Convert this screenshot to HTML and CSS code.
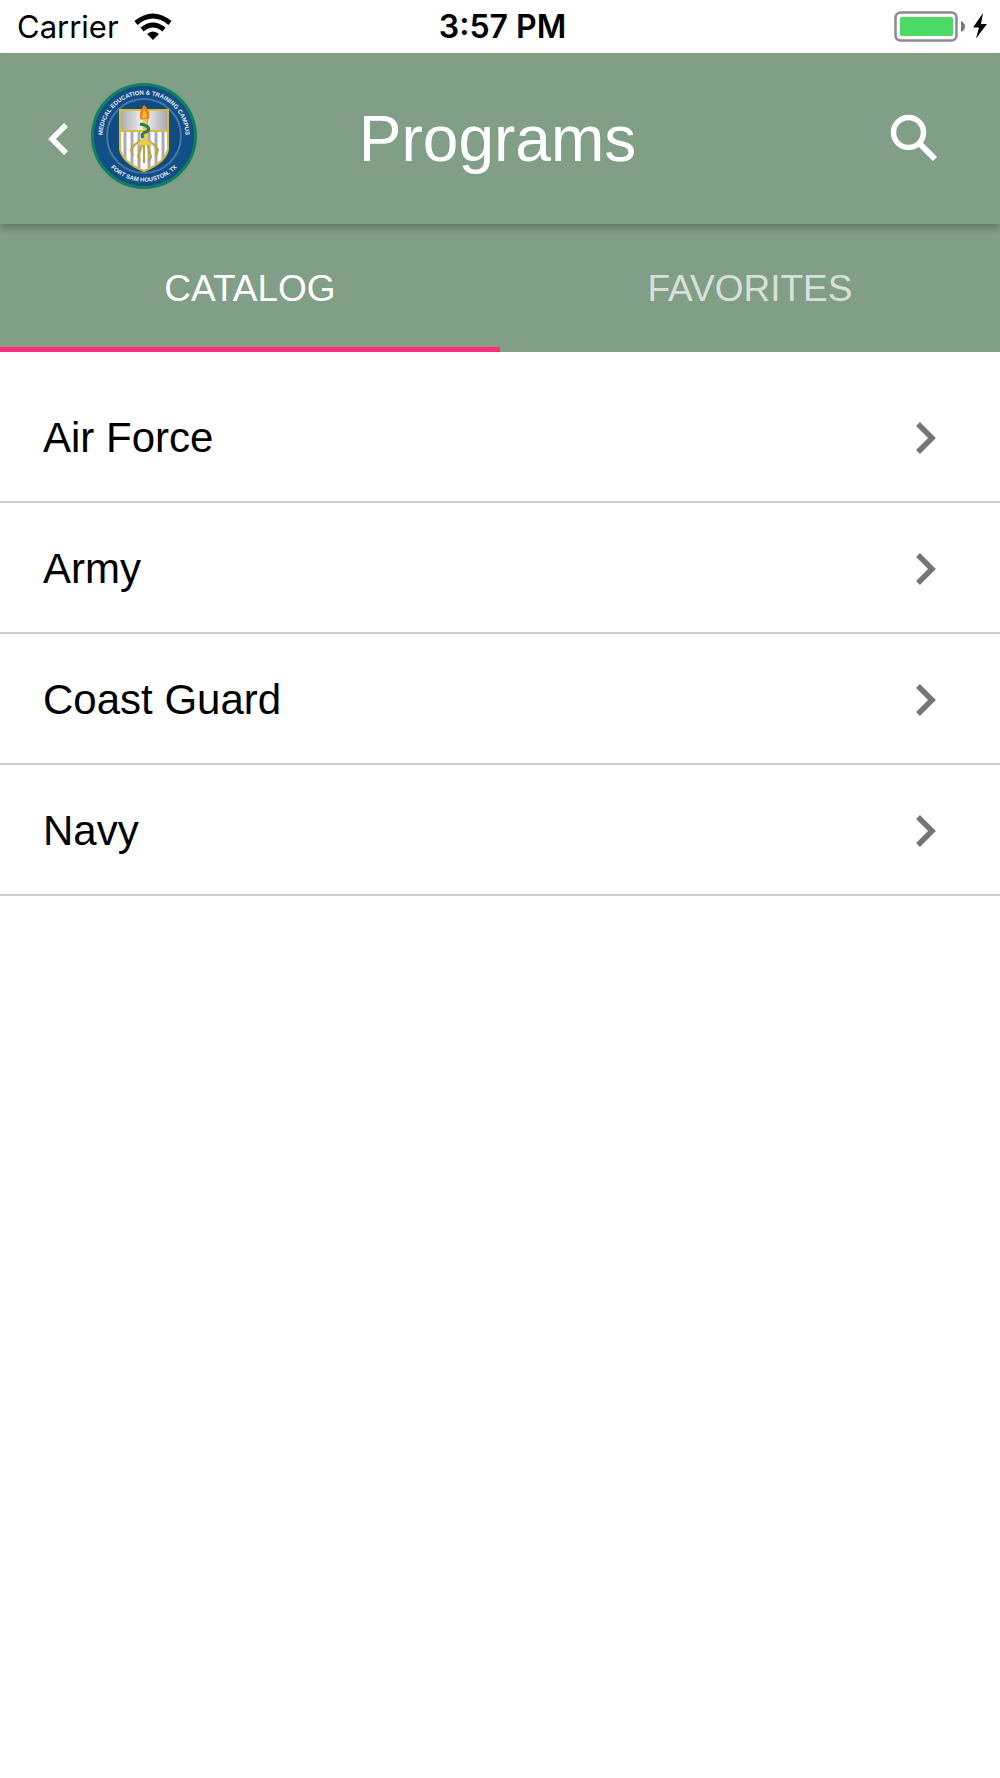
FILE: index.html
```html
<!DOCTYPE html>
<html lang="en">
<head>
<meta charset="utf-8">
<meta name="viewport" content="width=device-width, initial-scale=1">
<title>Programs</title>
<link rel="stylesheet" href="styles.css">
</head>
<body>
<div class="status-bar">
  <div class="status-left">
    <span>Carrier</span>
    <svg class="wifi" viewBox="0 0 38 28" width="38" height="28" aria-hidden="true">
      <path d="M2 10 Q19 -4 36 10" fill="none" stroke="#000" stroke-width="5"/>
      <path d="M8 16.500 Q19 7.500 30 16.500" fill="none" stroke="#000" stroke-width="5"/>
      <path d="M13 21 Q19 16 25 21 L19 27Z"/>
    </svg>
  </div>
  <div class="status-time">3:57 PM</div>
  <div class="status-right">
    <svg viewBox="0 0 94 32" width="94" height="32" aria-hidden="true">
      <rect x="1.500" y="1.500" width="61" height="28" rx="5" fill="#fff" stroke="#8c8c8c" stroke-width="2.500"/>
      <rect x="6" y="6" width="53" height="19" rx="2" fill="#4cd964"/>
      <path d="M67 10 Q71 12 71 15.500 Q71 19 67 21Z" fill="#777"/>
      <path d="M89 2 L79 16.500 L85 16.500 L82 27.500 L93 13 L87 13Z"/>
    </svg>
  </div>
</div>

<header class="app-bar">
  <div class="app-bar-start">
    <button class="icon-button" type="button" aria-label="Back">
      <svg viewBox="0 0 24 36" width="24" height="36"><path d="M20 4 L6 18 L20 32" fill="none" stroke="#fff" stroke-width="5.500"/></svg>
    </button>
    <svg class="seal" viewBox="0 0 106 106" width="106" height="106" role="img" aria-label="Medical Education and Training Campus seal">
      <defs>
        <linearGradient id="silver" x1="0" x2="1" y1="0" y2="0">
          <stop offset="0" stop-color="#a9a9b0"/><stop offset=".5" stop-color="#f6f6f8"/><stop offset="1" stop-color="#a4a4ac"/>
        </linearGradient>
        <clipPath id="shield"><path d="M29 27 H77 V66 Q75 79 53 88 Q31 79 29 66Z"/></clipPath>
        <path id="arc-top" d="M11.500 53 A41.500 41.500 0 0 1 94.500 53"/>
        <path id="arc-bottom" d="M14 77 A46 46 0 0 0 92 77"/>
      </defs>
      <circle cx="53" cy="53" r="51.500" fill="#134f87" stroke="#11805f" stroke-width="3"/>
      <circle cx="53" cy="53" r="37" fill="#134a80" stroke="#4379ad" stroke-width="2"/>
      <text class="seal-text"><textPath href="#arc-top" startOffset="50%">MEDICAL EDUCATION &amp; TRAINING CAMPUS</textPath></text>
      <text class="seal-text"><textPath href="#arc-bottom" startOffset="50%">FORT SAM HOUSTON, TX</textPath></text>
      <g clip-path="url(#shield)">
        <rect x="29" y="27" width="48" height="62" fill="#fff"/>
        <path d="M34 48V88 M41 48V88 M48 48V88 M58 48V88 M65 48V88 M72 48V88" stroke="#aaa9b7" stroke-width="3"/>
        <rect x="29" y="27" width="48" height="21" fill="url(#silver)"/>
        <path d="M29 48H77" stroke="#d6bd3c" stroke-width="2"/>
      </g>
      <path d="M29 27 H77 V66 Q75 79 53 88 Q31 79 29 66Z" fill="none" stroke="#d6bd3c" stroke-width="2"/>
      <path d="M51 36 H56 L55 57 Q63 60 67 67 L65 73 M54 58 Q58 64 60 74 L58 78 M53 58 Q50 64 47 74 L49 78 M52 57 Q43 60 40 67 L42 73 M53 58V80" fill="none" stroke="#bfa52f" stroke-width="2"/>
      <path d="M52 36h4v20l6 6H45l6-6Z" fill="#e3ce58"/>
      <path d="M49 41 Q60 43 57 48 Q49 50 52 55" fill="none" stroke="#2e7b4c" stroke-width="3"/>
      <path d="M49 36 Q48 28 53 22 Q60 28 58 36Z" fill="#f08122"/>
      <path d="M51 35 Q52 30 53 27 Q57 31 55 35Z" fill="#f9c52c"/>
    </svg>
  </div>
  <h1 class="app-title">Programs</h1>
  <div class="app-bar-end">
    <button class="icon-button" type="button" aria-label="Search">
      <svg viewBox="0 0 48 48" width="48" height="48"><circle cx="18.500" cy="18.500" r="15" fill="none" stroke="#fff" stroke-width="5.500"/><path d="M30 30 L45 45" stroke="#fff" stroke-width="6"/></svg>
    </button>
  </div>
</header>

<div class="tabs" role="tablist">
  <button class="tab tab-active" type="button" role="tab" aria-selected="true">CATALOG</button>
  <button class="tab" type="button" role="tab" aria-selected="false">FAVORITES</button>
</div>

<main>
  <ul class="program-list">
    <li><a class="program" href="#air-force"><span>Air Force</span><svg viewBox="0 0 24 36" width="24" height="36" aria-hidden="true"><path d="M4 4 L18 18 L4 32" fill="none" stroke="#757575" stroke-width="5.500"/></svg></a></li>
    <li><a class="program" href="#army"><span>Army</span><svg viewBox="0 0 24 36" width="24" height="36" aria-hidden="true"><path d="M4 4 L18 18 L4 32" fill="none" stroke="#757575" stroke-width="5.500"/></svg></a></li>
    <li><a class="program" href="#coast-guard"><span>Coast Guard</span><svg viewBox="0 0 24 36" width="24" height="36" aria-hidden="true"><path d="M4 4 L18 18 L4 32" fill="none" stroke="#757575" stroke-width="5.500"/></svg></a></li>
    <li><a class="program" href="#navy"><span>Navy</span><svg viewBox="0 0 24 36" width="24" height="36" aria-hidden="true"><path d="M4 4 L18 18 L4 32" fill="none" stroke="#757575" stroke-width="5.500"/></svg></a></li>
  </ul>
</main>
</body>
</html>
```
FILE: styles.css
```css
* {
  box-sizing: border-box;
}

body {
  margin: 0;
  background: #fff;
  color: #000;
  font-family: "Liberation Sans", Arial, sans-serif;
}

svg {
  display: block;
  flex: none;
}

button {
  border: 0;
  background: none;
  font: inherit;
  cursor: pointer;
}

.status-bar {
  display: grid;
  grid-template-columns: 1fr auto 1fr;
  align-items: center;
  min-height: 53px;
  padding: 1px 12px 0 17px;
  font: 400 31px/36px Inter, sans-serif;
}

.status-left {
  display: flex;
  align-items: center;
  gap: 15px;
}

.status-time {
  font-size: 32px;
  font-weight: 600;
}

.status-right {
  display: flex;
  justify-content: flex-end;
}

.app-bar {
  position: relative;
  z-index: 1;
  display: grid;
  grid-template-columns: 1fr auto 1fr;
  align-items: center;
  min-height: 171px;
  padding: 0 51px 0 46px;
  background: #819e87;
  color: #fff;
  box-shadow: 0 4px 8px -1px rgba(0, 0, 0, 0.3);
}

.app-bar-start {
  display: flex;
  align-items: center;
  gap: 21px;
}

.app-bar-end {
  display: flex;
  justify-content: flex-end;
  padding: 0 11px 2px 0;
}

.icon-button {
  padding: 0;
}

.seal {
  margin-bottom: 6px;
}

.seal-text {
  fill: #e6eef6;
  font-size: 6px;
  font-weight: 700;
  text-anchor: middle;
}

.app-title {
  margin: 0;
  font-size: 64px;
  font-weight: 400;
  line-height: 76px;
}

.tabs {
  display: grid;
  grid-template-columns: 1fr 1fr;
  background: #819e87;
}

.tab {
  min-height: 128px;
  padding: 6px 0 0;
  border-bottom: 5px solid transparent;
  color: rgba(255, 255, 255, 0.7);
  font-size: 37px;
}

.tab-active {
  border-color: #ff2d78;
  color: #fff;
}

.program-list {
  margin: 0;
  padding: 20px 0 0;
  list-style: none;
}

.program {
  display: flex;
  align-items: center;
  justify-content: space-between;
  min-height: 131px;
  padding: 2px 62px 0 43px;
  border-bottom: 2px solid #cecece;
  color: inherit;
  font-size: 42px;
  text-decoration: none;
}
```
